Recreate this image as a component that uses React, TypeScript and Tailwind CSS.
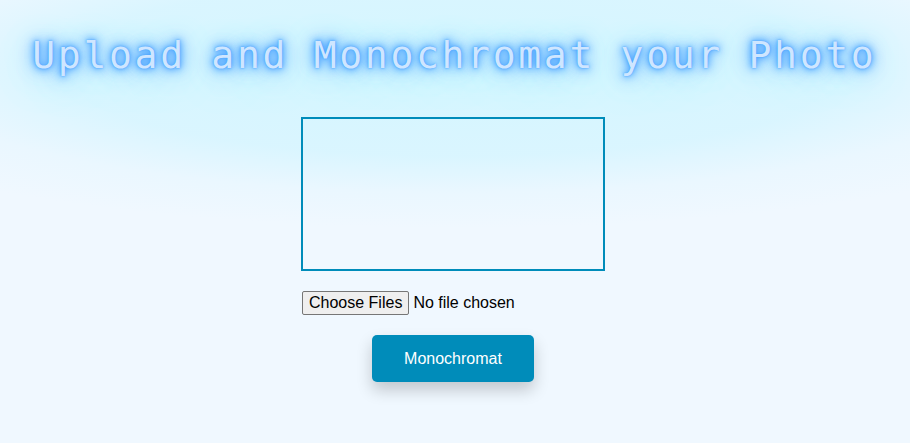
import React from "react";

export default function App() {
  return (
    <div className="min-h-screen w-full bg-[#f0f8ff] bg-[radial-gradient(ellipse_720px_160px_at_50%_68px,rgba(212,246,255,1)_0%,rgba(215,245,255,0.9)_55%,rgba(228,246,255,0.5)_78%,rgba(240,248,255,0)_100%)] pr-[4px] overflow-hidden font-['Liberation_Sans',Arial,sans-serif]">
      <div className="flex flex-col items-center">
        <h1 className="mt-[33px] pl-[2.7px] text-[38px] leading-[44px] tracking-[2.7px] font-normal whitespace-nowrap text-[#cfe6ff] font-['DejaVu_Sans_Mono',monospace] [text-shadow:0_0_2px_#3d9bff,0_0_6px_#4aa3ff,0_0_10px_#55a8ff,0_0_16px_#66b3ff,0_0_26px_#7cc4ff,0_10px_40px_#a0e4ff]">
          Upload and Monochromat your Photo
        </h1>
        <div className="mt-[40px] flex flex-col items-start">
          <canvas
            width={300}
            height={150}
            className="block w-[304px] h-[154px] border-2 border-[#008cba]"
          />
          <input
            type="file"
            multiple
            className="mt-[20px] ml-[1px] text-[16px] leading-[18px] text-black file:mr-[4px] file:px-[6px] file:py-[2px] file:border file:border-[#767676] file:rounded-[2px] file:bg-[#efefef] file:text-black"
          />
        </div>
        <button className="mt-[20px] px-[32px] py-[15px] bg-[#008cba] text-white text-[16px] leading-[17px] rounded-[5px] shadow-[0_8px_16px_0_rgba(0,0,0,0.2)]">
          Monochromat
        </button>
      </div>
    </div>
  );
}
